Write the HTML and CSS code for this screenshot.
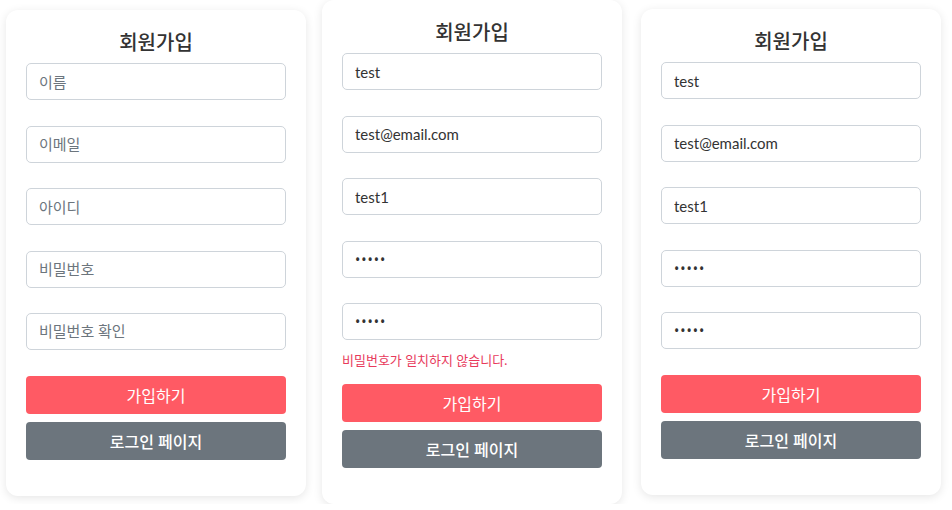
FILE: index.html
```html
<!DOCTYPE html>
<html lang="ko">
<head>
  <meta charset="UTF-8" />
  <title>회원가입</title>
  <link rel="stylesheet" href="styles.css">
</head>
<body>
  <div class="page">
    <form class="card card-first">
      <h2>회원가입</h2>
      <div class="field"><input type="text" placeholder="이름" /></div>
      <div class="field"><input type="email" placeholder="이메일" /></div>
      <div class="field"><input type="text" placeholder="아이디" /></div>
      <div class="field"><input type="password" placeholder="비밀번호" /></div>
      <div class="field"><input type="password" placeholder="비밀번호 확인" /></div>
      <button type="submit" class="btn btn-join">가입하기</button>
      <button type="button" class="btn btn-login">로그인 페이지</button>
    </form>

    <form class="card card-second">
      <h2>회원가입</h2>
      <div class="field"><input type="text" value="test" /></div>
      <div class="field"><input type="email" value="test@email.com" /></div>
      <div class="field"><input type="text" value="test1" /></div>
      <div class="field"><input type="password" value="12345" /></div>
      <div class="field has-error">
        <input type="password" value="12345" />
        <p class="error">비밀번호가 일치하지 않습니다.</p>
      </div>
      <button type="submit" class="btn btn-join">가입하기</button>
      <button type="button" class="btn btn-login">로그인 페이지</button>
    </form>

    <form class="card card-third">
      <h2>회원가입</h2>
      <div class="field"><input type="text" value="test" /></div>
      <div class="field"><input type="email" value="test@email.com" /></div>
      <div class="field"><input type="text" value="test1" /></div>
      <div class="field"><input type="password" value="12345" /></div>
      <div class="field"><input type="password" value="12345" /></div>
      <button type="submit" class="btn btn-join">가입하기</button>
      <button type="button" class="btn btn-login">로그인 페이지</button>
    </form>
  </div>
</body>
</html>
```

FILE: styles.css
```css
* {
  box-sizing: border-box;
}

body {
  margin: 0;
  background: #fff;
  font-family: "Segoe UI", Lato, "Noto Sans CJK KR", sans-serif;
  color: #333;
}

.page {
  display: flex;
  align-items: flex-start;
  gap: 16px;
  padding-left: 6px;
}

.card {
  width: 300px;
  flex: none;
  background: #fff;
  padding: 20px 20px 36px;
  border-radius: 12px;
  box-shadow: 0 2px 10px rgba(0,0,0,0.1);
}

.card-first {
  margin-top: 10px;
}

.card-second {
  margin-top: 0;
}

.card-third {
  margin-top: 9px;
  margin-left: 3px;
}

h2 {
  margin: 0 0 9px;
  font-size: 20px;
  line-height: 24px;
  font-weight: 500;
  text-align: center;
  color: #333;
}

.field {
  margin-bottom: 25.5px;
}

.field.has-error {
  margin-bottom: 0;
}

input {
  display: block;
  width: 100%;
  height: 37px;
  padding: 0 12px;
  border: 1px solid #ced4da;
  border-radius: 5px;
  font-family: inherit;
  font-size: 15px;
  color: #333;
  background: #fff;
}

input::placeholder {
  color: #6c757d;
}

input[type="password"] {
  font-family: "Noto Sans", "Noto Sans CJK KR", sans-serif;
  font-size: 14px;
  letter-spacing: 1px;
}

input[type="password"]::placeholder {
  font-family: "Segoe UI", Lato, "Noto Sans CJK KR", sans-serif;
  font-size: 15px;
  letter-spacing: 0;
}

.error {
  margin: 11px 0 15px;
  font-size: 13px;
  line-height: 18px;
  color: #e83a5c;
}

.btn {
  display: block;
  width: 100%;
  height: 38px;
  border: none;
  border-radius: 4px;
  color: #fff;
  font-family: inherit;
  font-size: 16px;
  font-weight: 400;
  cursor: pointer;
}

.btn-join {
  background-color: #ff5a64;
  margin-bottom: 8px;
}

.btn-login {
  background-color: #6c757d;
  font-weight: 500;
}
```
